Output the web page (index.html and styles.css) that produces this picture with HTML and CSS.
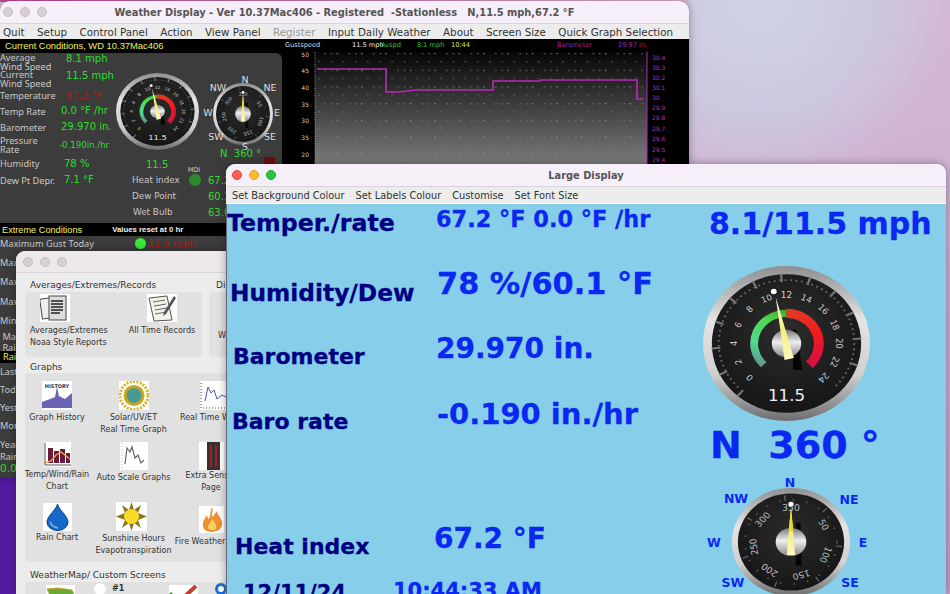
FILE: index.html
```html
<!DOCTYPE html>
<html lang="en">
<head>
    <meta charset="UTF-8">
    <meta name="viewport" content="width=device-width, initial-scale=1.0">
    <title>Weather Display</title>
    <link rel="stylesheet" href="styles.css">
</head>
<body>

    <svg class="defs" aria-hidden="true">
        <defs>
            <linearGradient id="rim" x1="0" y1="0" x2="0" y2="1">
                <stop offset="0" stop-color="#8f8f8f"/>
                <stop offset="0.35" stop-color="#e4e4e4"/>
                <stop offset="0.7" stop-color="#d0d0d0"/>
                <stop offset="1" stop-color="#6e6e6e"/>
            </linearGradient>
            <radialGradient id="face" cx="0.5" cy="0.4" r="0.6">
                <stop offset="0" stop-color="#2c2c2c"/>
                <stop offset="1" stop-color="#161616"/>
            </radialGradient>
            <linearGradient id="hub" x1="0" y1="0" x2="0" y2="1">
                <stop offset="0" stop-color="#777"/>
                <stop offset="0.45" stop-color="#eee"/>
                <stop offset="1" stop-color="#888"/>
            </linearGradient>
            <linearGradient id="needle" x1="0" y1="0" x2="0" y2="1">
                <stop offset="0" stop-color="#fff"/>
                <stop offset="0.5" stop-color="#f4ee80"/>
                <stop offset="1" stop-color="#fdf8c0"/>
            </linearGradient>
            <linearGradient id="arc-green" gradientUnits="userSpaceOnUse" x1="62" y1="108" x2="85" y2="52">
                <stop offset="0" stop-color="#5f9c90"/>
                <stop offset="0.3" stop-color="#50d890"/>
                <stop offset="0.75" stop-color="#50d850"/>
                <stop offset="1" stop-color="#44b030"/>
            </linearGradient>
            <linearGradient id="arc-red" gradientUnits="userSpaceOnUse" x1="85" y1="52" x2="108" y2="108">
                <stop offset="0" stop-color="#e03c20"/>
                <stop offset="0.5" stop-color="#f01c1c"/>
                <stop offset="1" stop-color="#dd1040"/>
            </linearGradient>
            <linearGradient id="graph-bg" x1="0" y1="0" x2="0" y2="1">
                <stop offset="0" stop-color="#060606"/>
                <stop offset="1" stop-color="#7c7c7c"/>
            </linearGradient>
            <pattern id="graph-dots" width="24.4" height="16.7" patternUnits="userSpaceOnUse">
                <rect x="6" y="1" width="1.2" height="1.2" fill="#9a9a9a"/>
                <rect x="18" y="1" width="1.2" height="1.2" fill="#777"/>
                <rect x="12" y="9" width="1.2" height="1.2" fill="#777"/>
                <rect x="0" y="1" width="1.2" height="1.2" fill="#777"/>
                <rect x="0" y="9" width="1.2" height="1.2" fill="#666"/>
            </pattern>

            <symbol id="speed-gauge" viewBox="0 0 170 170" preserveAspectRatio="none">
                <circle cx="85" cy="85" r="85" fill="url(#rim)"/>
                <circle cx="85" cy="85" r="76" fill="url(#face)"/>
                <path d="M38.72 140.15 A72 72 0 1 1 140.15 131.28" pathLength="270" fill="none" stroke="#777" stroke-width="9" stroke-dasharray="1.8 20.7"/>
                <path d="M36 133 A69 69 0 1 1 134 133" pathLength="270" fill="none" stroke="#666" stroke-width="2" stroke-dasharray="1.6 3"/>
                <path d="M61.7 108.3 A33 33 0 0 1 85 52" fill="none" stroke="url(#arc-green)" stroke-width="8"/>
                <path d="M85 52 A33 33 0 0 1 108.3 108.3" fill="none" stroke="url(#arc-red)" stroke-width="10"/>
                <g class="dial-num">
                    <text x="85" y="35" transform="rotate(-135 85 85)">0</text>
                    <text x="85" y="35" transform="rotate(-112.5 85 85)">2</text>
                    <text x="85" y="35" transform="rotate(-90 85 85)">4</text>
                    <text x="85" y="35" transform="rotate(-67.5 85 85)">6</text>
                    <text x="85" y="35" transform="rotate(-45 85 85)">8</text>
                    <text x="85" y="35" transform="rotate(-22.5 85 85)">10</text>
                    <text x="85" y="35">12</text>
                    <text x="85" y="35" transform="rotate(22.5 85 85)">14</text>
                    <text x="85" y="35" transform="rotate(45 85 85)">16</text>
                    <text x="85" y="35" transform="rotate(67.5 85 85)">18</text>
                    <text x="85" y="35" transform="rotate(90 85 85)">20</text>
                    <text x="85" y="35" transform="rotate(112.5 85 85)">22</text>
                    <text x="85" y="35" transform="rotate(135 85 85)">24</text>
                </g>
                <polygon points="90,70 95,70 101,114 92,114" fill="#050505"/>
                <circle cx="85" cy="85" r="15" fill="url(#hub)"/>
                <polygon points="74,34 92.5,101 83,103" fill="url(#needle)"/>
                <circle cx="72" cy="28" r="3" fill="#fff"/>
                <text class="dial-value" x="85" y="148">11.5</text>
            </symbol>

            <symbol id="wind-gauge" viewBox="0 0 100 100" preserveAspectRatio="none">
                <circle cx="50" cy="50" r="50" fill="url(#rim)"/>
                <circle cx="50" cy="50" r="45" fill="url(#face)"/>
                <circle cx="50" cy="50" r="41" pathLength="360" fill="none" stroke="#666" stroke-width="5" stroke-dasharray="1.6 49.8" transform="rotate(-98 50 50)"/>
                <circle cx="50" cy="50" r="39" pathLength="360" fill="none" stroke="#555" stroke-width="1.6" stroke-dasharray="2 15"/>
                <g class="dial-small">
                    <text x="50" y="21">350</text>
                    <text x="50" y="21" transform="rotate(60 50 50)">50</text>
                    <text x="50" y="21" transform="rotate(112 50 50)">100</text>
                    <text x="50" y="21" transform="rotate(164 50 50)">150</text>
                    <text x="50" y="21" transform="rotate(215 50 50)">200</text>
                    <text x="50" y="21" transform="rotate(262 50 50)">250</text>
                    <text x="50" y="21" transform="rotate(311 50 50)">300</text>
                </g>
                <polygon points="54,32 58,32 59,72 54,72" fill="#060606"/>
                <circle cx="50" cy="50" r="13" fill="url(#hub)"/>
                <polygon points="50,18 53.5,62 46.5,62" fill="url(#needle)"/>
                <polygon points="50,18 52,40 48,40" fill="#e8dc30"/>
                <circle cx="50" cy="15" r="2.2" fill="#fff"/>
            </symbol>
        </defs>
    </svg>

    <!-- main window -->
    <div class="window main-window">
        <div class="titlebar">
            <span class="lights"><i class="light"></i><i class="light"></i><i class="light"></i></span>
            <span class="title">Weather Display - Ver 10.37Mac406 - Registered  -Stationless   N,11.5 mph,67.2 °F</span>
        </div>
        <div class="menubar main-menu">
            <span>Quit</span><span>Setup</span><span>Control Panel</span><span>Action</span><span>View Panel</span>
            <span class="menu-off">Register</span><span>Input Daily Weather</span><span>About</span><span>Screen Size</span><span>Quick Graph Selection</span>
        </div>
        <div class="main-body">
            <div class="left-col">
                <div class="caption">Current Conditions, WD 10.37Mac406</div>
                <div class="conditions">
                    <div class="readings">
                        <div class="label">Average<br>Wind Speed</div><div class="value wind top">8.1 mph</div>
                        <div class="label">Current<br>Wind Speed</div><div class="value wind top">11.5 mph</div>
                        <div class="label">Temperature</div><div class="value wind hot">67.2 °F</div>
                        <div class="label">Temp Rate</div><div class="value rate">0.0 °F /hr</div>
                        <div class="label">Barometer</div><div class="value rate">29.970 in.</div>
                        <div class="label">Pressure<br>Rate</div><div class="value press">-0.190in./hr</div>
                        <div class="label">Humidity</div><div class="value hum">78 %</div>
                        <div class="label">Dew Pt Depr.</div><div class="value hum">7.1 °F</div>
                    </div>
                    <svg class="dials" viewBox="0 0 170 170">
                        <use href="#speed-gauge" x="4" y="20" width="83" height="77"/>
                        <use href="#wind-gauge" x="101" y="30" width="60" height="62"/>
                        <g class="rose-small">
                            <text x="133" y="30">N</text>
                            <text x="106" y="38">NW</text>
                            <text x="158" y="38">NE</text>
                            <text x="96" y="63">W</text>
                            <text x="165" y="63">E</text>
                            <text x="104" y="87">SW</text>
                            <text x="158" y="87">SE</text>
                            <text x="133" y="97">S</text>
                        </g>
                        <text class="dial-green" x="108" y="104">N  360 °</text>
                        <rect x="152" y="104" width="11" height="8" fill="#6a1010"/>
                        <text class="dial-green" x="34" y="115">11.5</text>
                        <text class="dial-mdi" x="82" y="119">MDI</text>
                        <circle cx="83" cy="127" r="6" fill="#2c8a2c"/>
                        <text class="dial-label" x="20" y="130">Heat index</text>
                        <text class="dial-label" x="20" y="146">Dew Point</text>
                        <text class="dial-label" x="21" y="162">Wet Bulb</text>
                        <text class="dial-green" x="96" y="131">67.2 °F</text>
                        <text class="dial-green" x="96" y="147">60.1 °F</text>
                        <text class="dial-green" x="96" y="163">63.0 °F</text>
                    </svg>
                </div>
                <div class="extreme-bar"><span>Extreme Conditions</span><b>Values reset at 0 hr</b></div>
                <div class="extremes">
                    <div class="stat stat-gust">Maximum Gust Today<i class="led"></i><span class="stat-hot">11.5 mph</span></div>
                    <div class="stat">Maximum Wind</div>
                    <div class="stat">Maximum Temp</div>
                    <div class="stat">Maximum Rate</div>
                    <div class="stat">Minimum Temp</div>
                    <div class="stat stat-two">&nbsp;Max<br>&nbsp;Rain</div>
                    <div class="rain-bar">Rain</div>
                    <div class="stat stat-short">Last Hour</div>
                    <div class="stat stat-short">Today</div>
                    <div class="stat stat-short">Yesterday</div>
                    <div class="stat stat-short">Month</div>
                    <div class="stat stat-two stat-year">Year<br>Rain</div>
                    <div class="stat-green">0.0</div>
                </div>
            </div>
            <div class="graph-col">
                <div class="graph-head">
                    <span class="gh-gust">Gustspeed</span><span class="gh-speed">11.5 mph</span><span class="gh-avg">Avspd</span><span class="gh-avgval">8.1 mph</span><span class="gh-time">10:44</span><span class="gh-baro">Barometer</span><span class="gh-baroval">29.97 in.</span>
                </div>
                <svg class="graph" viewBox="0 0 407 113">
                    <rect x="33" y="0" width="332" height="113" fill="url(#graph-bg)"/>
                    <rect x="33" y="0" width="332" height="113" fill="url(#graph-dots)"/>
                    <path d="M33 0V113" stroke="#999" stroke-width="1" stroke-dasharray="1 1.4"/>
                    <path d="M365 0V113" stroke="#c020c0" stroke-width="1"/>
                    <g class="axis-left">
                        <text x="27" y="5">50</text><text x="27" y="21">45</text><text x="27" y="38">40</text><text x="27" y="55">35</text>
                        <text x="27" y="71">30</text><text x="27" y="88">35</text><text x="27" y="105">20</text>
                    </g>
                    <g class="axis-right">
                        <text x="370" y="8">30.4</text><text x="370" y="18">30.3</text><text x="370" y="28">30.2</text><text x="370" y="38">30.1</text>
                        <text x="370" y="48">30</text><text x="370" y="58">29.9</text><text x="370" y="68">29.8</text><text x="370" y="79">29.7</text>
                        <text x="370" y="89">29.6</text><text x="370" y="100">29.5</text><text x="370" y="110">29.4</text>
                    </g>
                    <path d="M35 17H104V40H118L133 38H211V29H258L259 28H355V47H361" fill="none" stroke="#b82cb8" stroke-width="1.6"/>
                </svg>
            </div>
        </div>
    </div>

    <!-- tool palette -->
    <div class="window palette">
        <div class="titlebar palette-bar">
            <span class="lights"><i class="light"></i><i class="light"></i><i class="light"></i></span>
        </div>
        <div class="palette-body">
            <div class="group-title">Averages/Extremes/Records<span class="group-title-2">Display</span></div>
            <div class="group-row">
                <div class="group group-reports">
                    <div class="report-col">
                        <svg class="icon-reports" viewBox="0 0 30 28"><rect width="30" height="28" fill="#fff"/><rect x="1" y="4" width="16" height="20" fill="#eee" stroke="#444" transform="rotate(-8 9 14)"/><rect x="9" y="2" width="17" height="24" fill="#ddd" stroke="#444"/><path d="M11 7h12M11 10h12M11 13h12M11 16h12M11 19h9" stroke="#222" stroke-width="1.5"/></svg>
                        <span class="tool-label">Averages/Extremes</span>
                        <span class="tool-label">Noaa Style Reports</span>
                    </div>
                    <div class="records-col">
                        <svg class="icon-reports" viewBox="0 0 30 28"><rect width="30" height="28" fill="#fff"/><polygon points="2,4 20,2 25,26 7,27" fill="#f2f2ea" stroke="#555"/><path d="M6 8l12-2M7 12l12-2M8 16l12-2M8 20l12-2" stroke="#666"/><polygon points="27,2 29,4 19,20 16,22 17,18" fill="#555"/></svg>
                        <span class="tool-label">All Time Records</span>
                    </div>
                </div>
                <div class="group group-display"><span class="tool-label display-w">Web</span></div>
            </div>
            <div class="group-title graphs-title">Graphs</div>
            <div class="group tools">
                <div class="tool">
                    <svg class="icon icon-history" viewBox="0 0 30 29"><rect width="30" height="29" fill="#fff"/><text x="15" y="7" class="icon-word">HISTORY</text><path d="M0 27V21L8 18L13 16L15 6L17 15L23 18L30 12V27Z" fill="#6a64b4"/></svg>
                    <span class="tool-label">Graph History</span>
                </div>
                <div class="tool tool-solar">
                    <svg class="icon icon-history" viewBox="0 0 30 29"><rect width="30" height="29" fill="#fff"/><circle cx="15" cy="14.5" r="14" fill="none" stroke="#d8b020" stroke-width="3" stroke-dasharray="2 1.4"/><circle cx="15" cy="14.5" r="10.5" fill="#c8a818"/><circle cx="15" cy="14.5" r="7.5" fill="#4a9a94"/></svg>
                    <span class="tool-label">Solar/UV/ET</span>
                    <span class="tool-label">Real Time Graph</span>
                </div>
                <div class="tool">
                    <svg class="icon icon-dots" viewBox="0 0 30 29"><rect width="30" height="29" fill="#fff"/><path d="M1 2V27H30" stroke="#444" stroke-dasharray="1 2" fill="none"/><path d="M5 20L8 6L11 12L14 9L17 18L22 14L26 16" stroke="#4a56a8" fill="none"/></svg>
                    <span class="tool-label">Real Time Wind</span>
                </div>
                <div class="tool">
                    <svg class="icon icon-temp" viewBox="0 0 27 25"><rect width="27" height="25" fill="#fff"/><path d="M4 6h5v15H4zM10 9h5v12h-5zM16 7h5v14h-5zM22 11h4v10h-4z" fill="#6c1838"/><path d="M1 21L7 19L12 13L17 10L26 17" stroke="#e0b050" stroke-width="1.4" fill="none"/><path d="M1 1V23H27" stroke="#555" fill="none"/></svg>
                    <span class="tool-label">Temp/Wind/Rain</span>
                    <span class="tool-label">Chart</span>
                </div>
                <div class="tool">
                    <svg class="icon icon-auto" viewBox="0 0 28 28"><rect width="28" height="28" fill="#fff"/><path d="M2 1V26" stroke="#bbb" stroke-dasharray="1 2"/><path d="M5 22L7 6L10 10L12 5L15 16L18 13L21 21L24 18" stroke="#666" stroke-width="1.2" fill="none"/></svg>
                    <span class="tool-label">Auto Scale Graphs</span>
                </div>
                <div class="tool">
                    <svg class="icon icon-extra" viewBox="0 0 25 28"><rect width="25" height="28" fill="#fff"/><rect x="8" y="0" width="13" height="28" fill="#333"/><rect x="11" y="3" width="2" height="22" fill="#a02028"/><rect x="16" y="3" width="2" height="22" fill="#a02028"/></svg>
                    <span class="tool-label">Extra Sensor</span>
                    <span class="tool-label">Page</span>
                </div>
                <div class="tool">
                    <svg class="icon icon-rain" viewBox="0 0 29 28"><rect width="29" height="28" fill="#fff"/><path d="M14.5 1C15 6 25 13 25 19A10.5 8.5 0 0 1 4 19C4 13 14 6 14.5 1Z" fill="#1468c8" stroke="#0c3c80"/><path d="M7 19Q9 24 15 25" stroke="#7ab8f0" stroke-width="1.5" fill="none"/></svg>
                    <span class="tool-label">Rain Chart</span>
                </div>
                <div class="tool tool-sun">
                    <svg class="icon icon-sun" viewBox="0 0 31 29"><rect width="31" height="29" fill="#fff"/><polygon points="15.5,0 18,8 25,3 22,11 31,14.5 22,18 25,26 18,21 15.5,29 13,21 6,26 9,18 0,14.5 9,11 6,3 13,8" fill="#8a7420"/><circle cx="15.5" cy="14.5" r="7.5" fill="#fcd828"/></svg>
                    <span class="tool-label">Sunshine Hours</span>
                    <span class="tool-label">Evapotranspiration</span>
                </div>
                <div class="tool tool-fire">
                    <svg class="icon icon-fire" viewBox="0 0 25 27"><rect width="25" height="27" fill="#fff"/><path d="M13 1C15 6 11 8 14 11C15 8 17 7 18 5C18 9 24 13 23 19C22 24 17 26 12 26C6 26 3 22 4 17C5 13 7 12 7 9C9 11 9 13 10 13C12 9 11 5 13 1Z" fill="#ee9030"/><path d="M13 13C15 16 18 18 17 22C16 25 10 25 9 22C8 19 12 17 13 13Z" fill="#f8d060"/></svg>
                    <span class="tool-label">Fire Weather Page</span>
                </div>
            </div>
            <div class="group-title map-title">WeatherMap/ Custom Screens</div>
            <div class="group maps">
                <svg class="icon icon-map" viewBox="0 0 29 24"><rect width="29" height="24" fill="#fff"/><path d="M1 4L12 3L26 5L28 10L24 16L20 15L14 17L6 14Z" fill="#6aa838" stroke="#c8a030"/></svg>
                <i class="radio"></i><span class="radio-text">#1</span>
                <svg class="icon icon-check" viewBox="0 0 29 24"><rect width="29" height="24" fill="#fff"/><path d="M1 8L10 18L14 14" stroke="#3a8a3a" stroke-width="3" fill="none"/><path d="M13 14L27 1" stroke="#c04030" stroke-width="4"/></svg>
                <i class="radio radio-on"></i>
            </div>
        </div>
    </div>

    <!-- large display window -->
    <div class="window large-window">
        <div class="titlebar">
            <span class="lights"><i class="light red"></i><i class="light amber"></i><i class="light green"></i></span>
            <span class="title">Large Display</span>
        </div>
        <div class="menubar large-menu">
            <span>Set Background Colour</span><span>Set Labels Colour</span><span>Customise</span><span>Set Font Size</span>
        </div>
        <div class="large-body">
            <div class="big-label l-temp">Temper./rate</div>
            <div class="big-label l-hum">Humidity/Dew</div>
            <div class="big-label l-baro">Barometer</div>
            <div class="big-label l-rate">Baro rate</div>
            <div class="big-label l-heat">Heat index</div>
            <div class="big-label l-date">12/11/24</div>

            <div class="big-value v-temp">67.2 °F 0.0 °F /hr</div>
            <div class="big-value v-hum">78 %/60.1 °F</div>
            <div class="big-value v-baro">29.970 in.</div>
            <div class="big-value v-rate">-0.190 in./hr</div>
            <div class="big-value v-heat">67.2 °F</div>
            <div class="big-value v-time">10:44:33 AM</div>
            <div class="big-value v-wind">8.1/11.5 mph</div>
            <div class="big-value v-dir">N  360 °</div>

            <svg class="big-speed"><use href="#speed-gauge" width="167" height="155"/></svg>
            <svg class="big-wind" viewBox="0 0 180 124">
                <use href="#wind-gauge" x="32" y="17" width="118" height="108"/>
                <g class="rose-big">
                    <text x="90" y="16">N</text>
                    <text x="36" y="32">NW</text>
                    <text x="149" y="33">NE</text>
                    <text x="14" y="76">W</text>
                    <text x="163" y="76">E</text>
                    <text x="33" y="116">SW</text>
                    <text x="150" y="116">SE</text>
                </g>
            </svg>
        </div>
    </div>

</body>
</html>
```

FILE: styles.css
```css
html, body {
    margin: 0;
    height: 100%;
}
body {
    position: relative;
    width: 950px;
    height: 594px;
    overflow: hidden;
    font-family: "DejaVu Sans", sans-serif;
    background:
        linear-gradient(90deg, #c4489c, #e8b8d0) 0 0 / 690px 2px no-repeat,
        linear-gradient(90deg, #4e1a9e, #6a22b2) 0 470px / 40px 124px no-repeat,
        radial-gradient(circle at 760px 0, #d0d3e6 0, #ccc8de 110px, transparent 190px),
        linear-gradient(160deg, #dccfe0 0, #d2b8d4 40%, #c89cc4 100%);
}
.defs {
    position: absolute;
    width: 0;
    height: 0;
}

/* windows */
.window {
    position: absolute;
    border-radius: 9px 9px 0 0;
    box-shadow: 0 0 9px rgba(0, 0, 0, 0.35);
}
.main-window {
    left: 0;
    top: 1px;
    width: 689px;
    height: 477px;
    background: #000;
}
.palette {
    left: 16px;
    top: 251px;
    width: 240px;
    height: 343px;
    background: #ececec;
}
.large-window {
    left: 226px;
    top: 164px;
    width: 720px;
    height: 430px;
    background: #87ceeb;
}
.titlebar {
    position: relative;
    display: flex;
    align-items: center;
    justify-content: center;
    height: 22px;
    background: #f6eef8;
    border-radius: 9px 9px 0 0;
    border-bottom: 1px solid #d8d4da;
}
.title {
    white-space: pre;
    font-size: 9.85px;
    font-weight: bold;
    color: #555;
}
.lights {
    position: absolute;
    left: 6px;
    top: 6px;
    display: flex;
    gap: 7px;
}
.main-window .lights {
    left: 3px;
}
.light {
    width: 10px;
    height: 10px;
    border-radius: 50%;
    background: #d6d0d6;
    border: 0.5px solid #c4bec4;
    box-sizing: border-box;
}
.light.red { background: #ff5f57; border-color: #e0443e; }
.light.amber { background: #febc2e; border-color: #dea123; }
.light.green { background: #28c840; border-color: #1aab29; }
.menubar {
    display: flex;
    align-items: center;
    height: 15px;
    background: #ececec;
    font-size: 10px;
    color: #333;
    white-space: nowrap;
}
.main-menu {
    padding-left: 3px;
    gap: 12.5px;
    font-size: 10.3px;
}
.menu-off {
    color: #999;
}
.large-menu {
    padding-left: 6px;
    gap: 11px;
    height: 16px;
    font-size: 9.8px;
    border-bottom: 1px solid #fff;
}

/* main window contents */
.main-body {
    display: flex;
    height: 439px;
}
.left-col {
    width: 282px;
    flex: none;
}
.caption {
    height: 14px;
    line-height: 14px;
    padding-left: 5px;
    font-family: "Liberation Sans", sans-serif;
    font-size: 9.4px;
    color: #f4f060;
    white-space: nowrap;
}
.conditions {
    display: flex;
    height: 170px;
    background: #3c3c3c;
    border-radius: 0 6px 0 0;
}
.readings {
    flex: none;
    width: 112px;
    display: grid;
    grid-template-columns: 58px 54px;
    grid-template-rows: 17px 18px 15px 16px 16px 20px 17px 16px;
    align-items: center;
    white-space: nowrap;
}
.label {
    font-family: "Noto Sans", sans-serif;
    font-size: 9.2px;
    line-height: 9px;
    color: #c8c8c8;
}
.value {
    font-size: 10px;
    line-height: 12px;
    color: #2cdc2c;
}
.top { align-self: start; }
.wind { margin-left: 8px; }
.rate { margin-left: 3px; }
.press { margin-left: 1px; font-size: 8.6px; }
.hum { margin-left: 6px; }
.hot { color: #a82020; }
.dials {
    width: 170px;
    height: 170px;
}
.rose-small text {
    font-size: 9.5px;
    fill: #ddd;
    text-anchor: middle;
}
.dial-green {
    font-size: 10px;
    fill: #2cdc2c;
    white-space: pre;
}
.dial-label {
    font-size: 8.8px;
    fill: #c8c8c8;
}
.dial-mdi {
    font-size: 6.5px;
    fill: #ccc;
    text-anchor: middle;
}
.dial-num text {
    font-size: 9px;
    fill: #ccc;
    text-anchor: middle;
}
.dial-value {
    font-size: 17px;
    fill: #f0f0f0;
    text-anchor: middle;
}
.dial-small text {
    font-size: 8px;
    fill: #bbb;
    text-anchor: middle;
}
.extreme-bar {
    display: flex;
    align-items: center;
    height: 13px;
    padding-left: 2px;
    background: #000;
    font-family: "Liberation Sans", sans-serif;
    font-size: 9.2px;
    color: #f4f060;
    white-space: nowrap;
}
.extreme-bar b {
    margin-left: 30px;
    font-size: 7.8px;
    color: #f0f0f0;
}
.extremes {
    height: 242px;
    background: #3c3c3c;
}
.stat {
    display: flex;
    align-items: center;
    height: 19.5px;
    font-family: "Noto Sans", sans-serif;
    font-size: 9.2px;
    line-height: 11px;
    color: #c8c8c8;
    white-space: nowrap;
}
.stat-gust {
    height: 14px;
    margin-bottom: 2.5px;
}
.stat-two {
    display: block;
    height: 20px;
}
.stat-year {
    height: 24px;
    margin-top: 4px;
    line-height: 12px;
}
.stat-short {
    height: 18px;
}
.led {
    width: 11px;
    height: 11px;
    margin-left: 41px;
    border-radius: 50%;
    background: #38e838;
}
.stat-hot {
    margin-left: 2px;
    font-family: "DejaVu Sans", sans-serif;
    font-size: 10px;
    color: #a81c1c;
}
.rain-bar {
    height: 12px;
    line-height: 12px;
    padding-left: 3px;
    background: #000;
    font-family: "Noto Sans", sans-serif;
    font-size: 9.2px;
    color: #f4f060;
}
.stat-green {
    font-size: 10.5px;
    line-height: 10px;
    color: #2cdc2c;
}
.graph-col {
    flex: 1;
    position: relative;
}
.graph-head {
    height: 13px;
    position: relative;
    font-size: 6.6px;
    line-height: 12px;
    white-space: nowrap;
}
.graph-head span {
    position: absolute;
    top: 0;
}
.gh-gust { left: 3px; color: #ddd; }
.gh-speed { left: 70px; color: #eee; }
.gh-avg { left: 99px; color: #2cc82c; }
.gh-avgval { left: 135px; color: #2cc82c; }
.gh-time { left: 169px; color: #e4e040; }
.gh-baro { left: 275px; color: #a020a0; }
.gh-baroval { left: 336px; color: #a020a0; }
.graph {
    display: block;
    width: 407px;
    height: 113px;
}
.axis-left text {
    font-size: 6px;
    fill: #ccc;
    text-anchor: end;
}
.axis-right text {
    font-size: 6px;
    fill: #b030b0;
}

/* palette contents */
.palette-bar {
    height: 21px;
    background: #ece8ec;
}
.palette-bar .lights {
    left: 7px;
}
.palette-body {
    padding: 4px 0 0 9px;
}
.group-title {
    height: 15px;
    padding-left: 5px;
    font-size: 9px;
    line-height: 17px;
    color: #333;
    white-space: nowrap;
}
.group-title-2 {
    margin-left: 60px;
}
.group-row {
    display: flex;
    gap: 7px;
}
.group {
    background: #e1e1e1;
    border-radius: 4px;
}
.group-reports {
    display: flex;
    width: 177px;
    height: 65px;
    flex: none;
    position: relative;
}
.group-display {
    width: 100px;
    height: 65px;
    padding: 31px 0 0 9px;
    box-sizing: border-box;
}
.report-col {
    display: flex;
    flex-direction: column;
    padding: 2px 0 0 5px;
    width: 93px;
    flex: none;
}
.records-col {
    display: flex;
    flex-direction: column;
    align-items: center;
    padding-top: 2px;
    width: 78px;
    flex: none;
}
.icon-reports {
    width: 30px;
    height: 28px;
    margin: 0 0 3px 10px;
}
.records-col .icon-reports {
    margin-left: 0;
}
.tool-label {
    font-size: 8px;
    line-height: 12.3px;
    color: #333;
    white-space: nowrap;
}
.graphs-title {
    height: 14px;
    margin-top: 2px;
    line-height: 16px;
}
.tools {
    display: grid;
    grid-template-columns: 64px 89px 66px;
    grid-template-rows: 61px 61px 59px;
    width: 240px;
    height: 189px;
    padding-top: 8px;
    box-sizing: border-box;
}
.tool {
    display: flex;
    flex-direction: column;
    align-items: center;
}
.icon {
    display: block;
    margin-bottom: 2px;
}
.icon-history { width: 30px; height: 29px; }
.icon-dots { width: 30px; height: 29px; margin-left: 8px; }
.icon-temp { width: 27px; height: 25px; }
.icon-auto { width: 28px; height: 28px; }
.icon-extra { width: 25px; height: 28px; margin-bottom: 0; }
.icon-rain { width: 29px; height: 28px; margin-bottom: 1px; }
.icon-sun { width: 31px; height: 29px; margin: -1px 0 2px -4px; }
.icon-fire { width: 25px; height: 27px; margin-top: 3px; margin-bottom: 3px; }
.icon-map { width: 29px; height: 24px; margin: 3px 19px 0 21px; }
.icon-check { width: 29px; height: 24px; margin: 3px 17px 0 45px; }
.icon-word {
    font-size: 5px;
    font-weight: bold;
    fill: #333;
    text-anchor: middle;
}
.map-title {
    height: 14px;
    margin-top: 6px;
    line-height: 14px;
}
.maps {
    display: flex;
    align-items: flex-start;
    width: 240px;
    height: 30px;
}
.radio {
    width: 12px;
    height: 12px;
    margin-top: 1px;
    flex: none;
    border-radius: 50%;
    background: #fff;
}
.radio-on {
    background: #fff;
    border: 3.5px solid #1a70d8;
    box-sizing: border-box;
}
.radio-text {
    margin: 1px 0 0 6px;
    font-size: 8px;
    line-height: 12px;
    font-weight: bold;
    color: #333;
}

/* large display, a free canvas of readouts */
.large-body {
    position: relative;
    height: 391px;
    overflow: hidden;
    border-left: 1px solid #667;
    box-sizing: border-box;
    width: 720px;
}
.big-label, .big-value {
    position: absolute;
    font-weight: bold;
    white-space: pre;
    line-height: 1;
    -webkit-text-stroke: 0.3px currentColor;
}
.big-label {
    font-size: 22px;
    color: #000080;
}
.big-value {
    color: #0a28f0;
}
.l-temp { left: 0; top: 8px; font-size: 23.7px; }
.l-hum { left: 3px; top: 77px; font-size: 23.3px; }
.l-baro { left: 6px; top: 142px; }
.l-rate { left: 5px; top: 207px; }
.l-heat { left: 8px; top: 332px; }
.l-date { left: 16px; top: 379px; font-size: 21px; }
.v-temp { left: 209px; top: 4px; font-size: 22.4px; }
.v-hum { left: 210px; top: 65px; font-size: 30.4px; }
.v-baro { left: 209px; top: 131px; font-size: 28px; }
.v-rate { left: 210px; top: 196px; font-size: 29px; }
.v-heat { left: 207px; top: 321px; font-size: 28px; }
.v-time { left: 166px; top: 377px; font-size: 21px; }
.v-wind { left: 482px; top: 5px; font-size: 30px; }
.v-dir { left: 483px; top: 222px; font-size: 38px; }
.big-speed {
    position: absolute;
    left: 476px;
    top: 62px;
    width: 167px;
    height: 155px;
}
.big-wind {
    position: absolute;
    left: 473px;
    top: 267px;
    width: 180px;
    height: 124px;
}
.rose-big text {
    font-size: 12.5px;
    font-weight: bold;
    fill: #0a28f0;
    text-anchor: middle;
}
```
